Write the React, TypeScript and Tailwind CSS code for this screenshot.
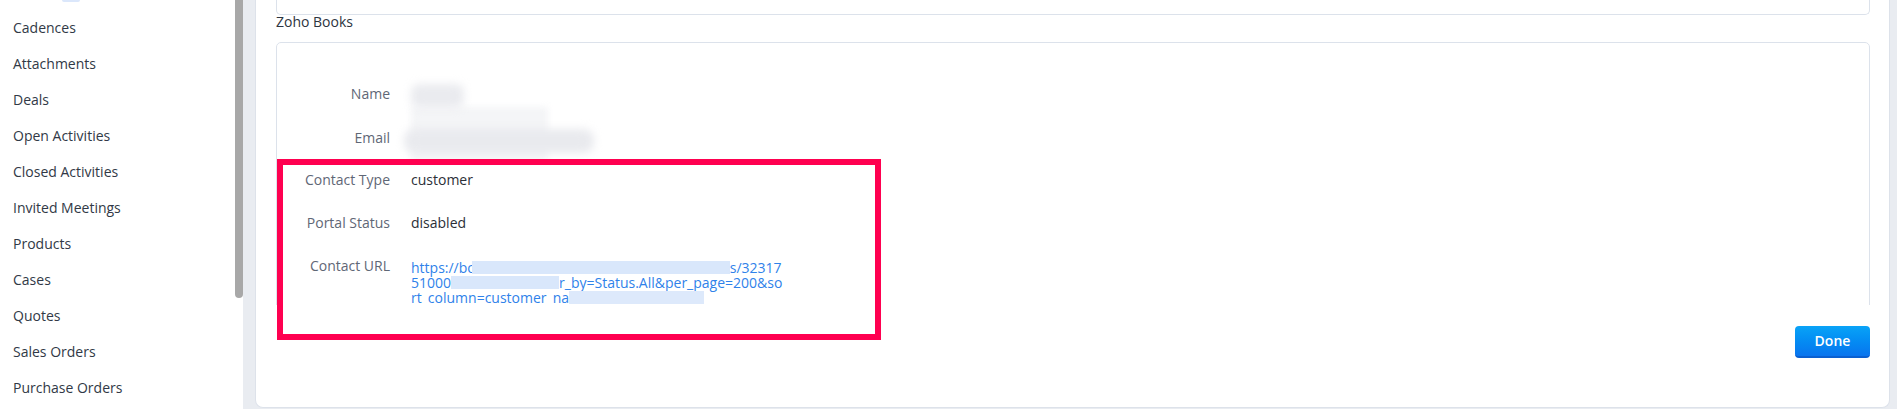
import React from "react";

const sideItems = [
  "Cadences",
  "Attachments",
  "Deals",
  "Open Activities",
  "Closed Activities",
  "Invited Meetings",
  "Products",
  "Cases",
  "Quotes",
  "Sales Orders",
  "Purchase Orders",
];

function Row({ label, children, className }: { label: string; children?: React.ReactNode; className?: string }) {
  return (
    <div className={"flex " + (className ?? "")}>
      <div className="w-[113px] shrink-0 text-right text-[14px] leading-[20px] text-[#5f6776]">{label}</div>
      <div className="ml-[21px] text-[14px] leading-[20px] text-[#2b2f37]">{children}</div>
    </div>
  );
}

export default function App() {
  return (
    <div className="relative flex w-[1897px] h-[409px] overflow-hidden bg-[#e9ecf1] font-['Open_Sans',sans-serif]">
      {/* Sidebar */}
      <div className="flex w-[243px] shrink-0 bg-white">
        <div className="w-[235px] flex flex-col pl-[13px]">
          <div className="ml-[49px] w-[18px] h-[2px] rounded-b-[6px] bg-[#dbe7fb]" />
          <div className="mt-[7px] flex flex-col">
            {sideItems.map((s) => (
              <div key={s} className="h-[36px] flex items-center text-[14px] text-[#313946]">
                {s}
              </div>
            ))}
          </div>
        </div>
        <div className="w-[8px]">
          <div className="-mt-[8px] h-[306px] rounded-[4px] bg-[#a8a8a8]" />
        </div>
      </div>

      <div className="w-[12px] shrink-0" />

      {/* Main panel */}
      <div className="w-[1635px] shrink-0 h-[408px] bg-white border border-t-0 border-[#dde2ea] rounded-b-[8px] pl-[20px] pr-[19px] flex flex-col">
        <div className="h-[15px] border border-t-0 border-[#dce2eb] rounded-b-[5px]" />
        <div className="h-[27px] text-[14px] leading-[14px] text-[#2d3440]">Zoho Books</div>
        <div className="h-[263px] overflow-hidden">
          <div className="relative h-[330px] border border-[#dce2eb] rounded-[5px] pt-[41px]">
            {/* blurred redactions */}
            <div className="absolute left-[134px] top-[64px] w-[137px] h-[54px] bg-[#f4f5f7] blur-[3px]" />
            <div className="absolute left-[134px] top-[41px] w-[53px] h-[24px] rounded-[8px] bg-[#eaebef] blur-[4px]" />
            <div className="absolute left-[127px] top-[86px] w-[190px] h-[24px] rounded-[10px] bg-[#e9eaee] blur-[4px]" />

            <Row label="Name" />
            <Row label="Email" className="mt-[24px]" />
            <Row label="Contact Type" className="mt-[22px]">customer</Row>
            <Row label="Portal Status" className="mt-[23px]">disabled</Row>
            <div className="flex mt-[23px]">
              <div className="w-[113px] shrink-0 text-right text-[14px] leading-[20px] text-[#5f6776]">Contact URL</div>
              <div className="ml-[21px] pt-[4px] text-[14px] leading-[15px] text-[#2f82ea]">
                <div className="flex items-center h-[15px] whitespace-nowrap">
                  <span>https://bo</span>
                  <div className="w-[258px] h-[13px] bg-[#d9e7fb] -ml-[4px]" />
                  <span>s/32317</span>
                </div>
                <div className="flex items-center h-[15px] whitespace-nowrap">
                  <span>51000</span>
                  <div className="w-[108px] h-[13px] bg-[#d9e7fb]" />
                  <span>r_by=Status.All&amp;per_page=200&amp;so</span>
                </div>
                <div className="flex items-start h-[14px] overflow-hidden whitespace-nowrap">
                  <span className="leading-[15px]">rt_column=customer_na</span>
                  <div className="mt-[1px] w-[135px] h-[13px] bg-[#dde9fb]" />
                </div>
              </div>
            </div>
          </div>
        </div>
        <div className="flex justify-end pt-[21px]">
          <button className="w-[75px] h-[32px] rounded-[4px] bg-gradient-to-b from-[#0aa3f7] to-[#0a74ee] border-b-2 border-[#0a5fd0] text-white text-[14px] font-semibold leading-none flex items-center justify-center">
            Done
          </button>
        </div>
      </div>

      {/* annotation box */}
      <div className="absolute left-[277px] top-[159px] w-[604px] h-[181px] border-[6px] border-[#ff0050]" />
    </div>
  );
}
